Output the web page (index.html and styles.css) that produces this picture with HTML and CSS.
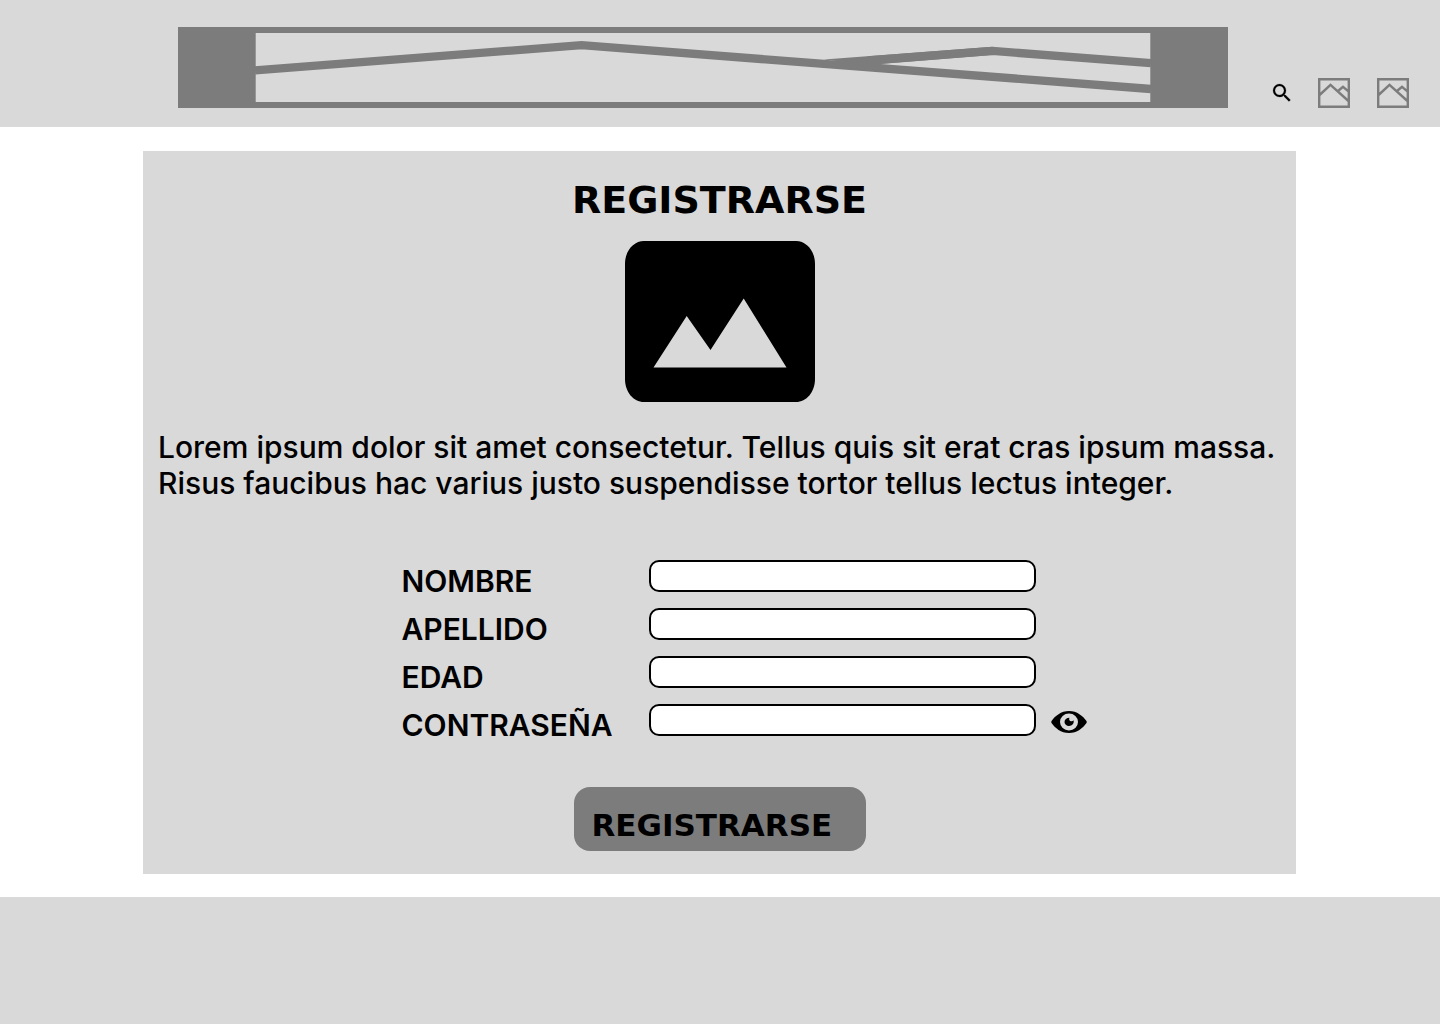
FILE: index.html
```html
<!DOCTYPE html>
<html lang="es">
<head>
<meta charset="utf-8">
<meta name="viewport" content="width=device-width, initial-scale=1">
<title>Registrarse</title>
<link rel="stylesheet" href="styles.css">
</head>
<body>
<header class="site-header">
  <svg class="banner" viewBox="0 0 1050 81" preserveAspectRatio="none" aria-hidden="true">
    <path fill="#7c7c7c" fill-rule="evenodd" d="M0 0H1050V81H0ZM77.700 6V75H972.300V6Z"/>
    <path fill="#7c7c7c" d="M646 32.600L814.500 19.700V28L690 38Z"/>
    <path fill="none" stroke="#7c7c7c" stroke-width="8.300" d="M77 43.300L403.500 18.200L973 62M690 33.500L814.500 23.900L973 36.200"/>
  </svg>
  <nav class="tools">
    <button class="icon-button" type="button" aria-label="Buscar">
      <svg width="24" height="24" viewBox="0 0 24 24" stroke="#000" stroke-width=".2"><path d="M15.500 14h-.79l-.28-.27A6.471 6.471 0 0 0 16 9.500 6.500 6.500 0 1 0 9.500 16c1.610 0 3.090-.59 4.230-1.570l.27.28v.79l5 4.990L20.490 19l-4.990-5zm-6 0C7.010 14 5 11.990 5 9.500S7.010 5 9.500 5 14 7.010 14 9.500 11.990 14 9.500 14z"/></svg>
    </button>
    <a class="thumb" href="#" aria-label="Imagen 1">
      <svg width="32" height="30" viewBox="0 0 32 30" fill="none" stroke="#7c7c7c" stroke-width="2.400"><path d="M1.200 1.200H30.800V28.800H1.200ZM1 17.500L12.500 6.800L31 23.500M20 13L25 8.800L31 13.800"/></svg>
    </a>
    <a class="thumb" href="#" aria-label="Imagen 2">
      <svg width="32" height="30" viewBox="0 0 32 30" fill="none" stroke="#7c7c7c" stroke-width="2.400"><path d="M1.200 1.200H30.800V28.800H1.200ZM1 17.500L12.500 6.800L31 23.500M20 13L25 8.800L31 13.800"/></svg>
    </a>
  </nav>
</header>
<main class="card">
  <h1 class="title">REGISTRARSE</h1>
  <svg class="picture" width="190" height="161" viewBox="0 0 190 161" aria-hidden="true">
    <path fill-rule="evenodd" d="M19 0H171C181.500 0 190 10 190 23V138C190 151 181.500 161 171 161H19C8.500 161 0 151 0 138V23C0 10 8.500 0 19 0ZM28.500 126.500H161.500L118.700 57.500L85.500 109L61.700 75Z"/>
  </svg>
  <p class="intro">Lorem ipsum dolor sit amet consectetur. Tellus quis sit erat cras ipsum massa. Risus faucibus hac varius justo suspendisse tortor tellus lectus integer.</p>
  <form class="form" id="signup">
    <div class="row"><label class="label" for="nombre">NOMBRE</label><input class="field" id="nombre" type="text"></div>
    <div class="row"><label class="label" for="apellido">APELLIDO</label><input class="field" id="apellido" type="text"></div>
    <div class="row"><label class="label" for="edad">EDAD</label><input class="field" id="edad" type="text" inputmode="numeric"></div>
    <div class="row">
      <label class="label" for="clave">CONTRASEÑA</label><input class="field" id="clave" type="password">
      <button class="icon-button reveal" type="button" aria-label="Mostrar contraseña">
        <svg width="36" height="22" viewBox="0 0 36 22"><path fill-rule="evenodd" d="M18 0C26 0 32 5 35.500 10Q36 11 35.500 12C32 17 26 22 18 22S4 17 .5 12Q0 11 .5 10C4 5 10 0 18 0ZM18 2.500A9 8.500 0 1 0 18 19.500A9 8.500 0 1 0 18 2.500Z"/><path d="M18.500 6.800C17.500 8.500 18.500 10.500 20.500 10.300Q21.800 10.100 22.500 9.300C23.500 12.500 21 15 18 15C15.500 15 13.500 13.200 13.500 11C13.500 8.500 15.500 6.800 18.500 6.800Z"/></svg>
      </button>
    </div>
  </form>
  <button class="submit" type="submit" form="signup">REGISTRARSE</button>
</main>
<footer class="site-footer"></footer>
</body>
</html>
```
FILE: styles.css
```css
* {
  box-sizing: border-box;
}

body {
  margin: 0;
  min-height: 100vh;
  display: flex;
  flex-direction: column;
  background: #fff;
  color: #000;
  font-family: Inter, sans-serif;
}

svg {
  display: block;
}

.site-header {
  display: flex;
  align-items: flex-end;
  gap: 42px;
  padding: 27px 31px 19px 178px;
  background: #d9d9d9;
}

.banner {
  flex: 1;
  min-width: 0;
  height: 81px;
}

.tools {
  display: flex;
  align-items: center;
  gap: 27px;
}

.icon-button {
  padding: 0;
  border: 0;
  background: none;
  cursor: pointer;
}

.tools .icon-button {
  margin-right: -3px;
}

.card {
  display: flex;
  flex-direction: column;
  align-items: center;
  margin: 24px 144px 23px 143px;
  padding: 27px 15px 23px;
  background: #d9d9d9;
}

.title,
.submit {
  font-family: "DejaVu Sans", sans-serif;
  font-weight: 700;
}

.title {
  margin: 0 0 19px;
  font-size: 38px;
  line-height: 44px;
}

.intro {
  align-self: stretch;
  margin: 27px 0 59px;
  font-size: 30px;
  font-weight: 500;
  line-height: 36px;
}

.form {
  display: flex;
  flex-direction: column;
  gap: 9px;
  padding-left: 48px;
  width: 734px;
  max-width: 100%;
}

.row {
  display: flex;
  align-items: flex-start;
}

.label {
  flex: 0 0 248px;
  padding-top: 3px;
  padding-left: 1px;
  font-size: 30px;
  font-weight: 600;
  line-height: 36px;
}

.field {
  flex: 0 1 387px;
  min-width: 0;
  height: 32px;
  padding: 0 10px;
  border: 2px solid #000;
  border-radius: 10px;
  background: #fff;
  font: 500 18px/24px Inter, sans-serif;
}

.reveal {
  padding-top: 7px;
  margin-left: 15px;
}

.submit {
  width: 292px;
  height: 64px;
  margin-top: 44px;
  padding: 12px 18px 0;
  border: 0;
  border-radius: 16px;
  background: #7c7c7c;
  color: #000;
  font-size: 31px;
  line-height: 36px;
  text-align: left;
  cursor: pointer;
}

.site-footer {
  flex: 1;
  min-height: 127px;
  background: #d9d9d9;
}
```
